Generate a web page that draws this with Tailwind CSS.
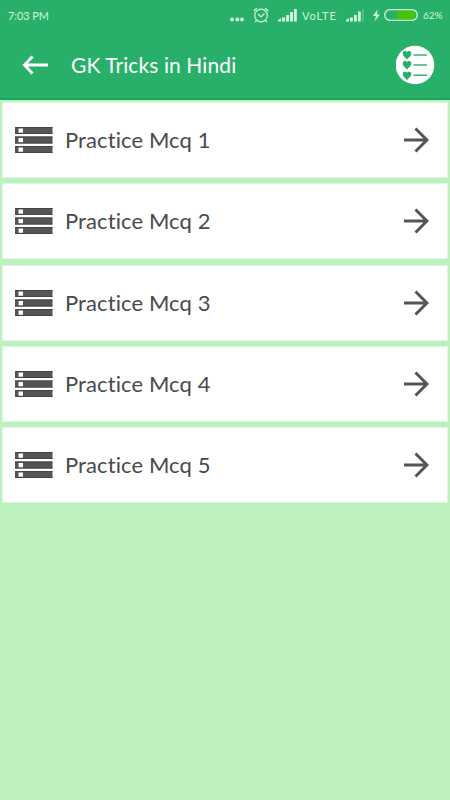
<!DOCTYPE html>
<html lang="en">
<head>
<meta charset="utf-8">
<meta name="viewport" content="width=device-width">
<title>GK Tricks in Hindi</title>
<script src="https://cdn.jsdelivr.net/npm/@tailwindcss/browser@4"></script>
</head>
<body class="w-[450px] h-[800px] overflow-hidden bg-[#bdf1bf] font-['Lato',sans-serif]">
<svg class="hidden">
  <defs>
    <symbol id="storage" viewBox="0 0 38 26">
      <path fill="#555" d="M0 0h37.500v7H0zM0 9.500h37.500v7H0zM0 19h37.500v7H0z"/>
      <path fill="none" stroke="#444" d="M0 .5h37.500M0 6.500h37.500M0 10h37.500M0 16h37.500M0 19.500h37.500M0 25.500h37.500"/>
      <path fill="#fff" d="M3.500 1.500h4.500v4.300h-4.500zM3.500 11h4.500v4.300h-4.500zM3.500 20.500h4.500v4.300h-4.500z"/>
    </symbol>
    <symbol id="next" viewBox="0 0 26 26">
      <path d="M1 13h22M12.500 1.500 24 13 12.500 24.500" fill="none" stroke="#555" stroke-width="3"/>
    </symbol>
    <symbol id="heart" viewBox="0 0 8 8">
      <path fill="#27ae68" d="M4 8 1 5C-1 3 0 0 2 0c1 0 1.700.5 2 1.300C4.300.5 5 0 6 0c2 0 3 3 1 5z"/>
    </symbol>
  </defs>
</svg>
<header class="h-[100px] bg-[#28b06a] border-b-2 border-[#12a95d] text-white">
  <div class="flex h-[30px] items-center pl-[8px] text-[#d3f5df] leading-none">
    <span class="w-[222px] text-[11px] tracking-[-0.1px]">7:03 PM</span>
    <svg class="w-[14px] h-[20px] shrink-0" viewBox="0 0 14 20" fill="currentColor"><circle cx="2" cy="14.500" r="1.900"/><circle cx="7.300" cy="14.500" r="1.900"/><circle cx="12" cy="14.500" r="1.900"/></svg>
    <svg class="ml-[9px] w-[16px] h-[16px] shrink-0" viewBox="0 0 16 16" fill="none" stroke="currentColor" stroke-width="1.200"><circle cx="8" cy="8.500" r="6.300"/><path d="m5 7 3 3 3.500-3.500M.7 4 4 1M12 1l3.300 3M3.500 13.500 2 15M12.500 13.500 14 15"/></svg>
    <svg class="ml-[9px] w-[20px] h-[14px] shrink-0" viewBox="0 0 20 14" fill="currentColor"><path d="M0 13.500V12l3-2v3.500zM4 9.500h3v4H4zM8 7h3v6.500H8zM12 4h3v9.500h-3zM16 1h2.800v12.500H16z"/></svg>
    <span class="ml-[4px] w-[36px] text-[11px] tracking-[0.9px] whitespace-nowrap">VoLTE</span>
    <svg class="ml-[8px] w-[20px] h-[14px] shrink-0" viewBox="0 0 20 14" fill="currentColor"><path d="M0 13.500V12l3-2v3.500zM4 9.500h2.800v4H4zM8 7h2.800v6.500H8zM12 3.500h2.800v10H12z"/><path opacity=".25" d="M16 1h2v12.500h-2z"/></svg>
    <svg class="ml-[7px] w-[7px] h-[13px] shrink-0" viewBox="0 0 7 13" fill="currentColor"><path d="M4.500.5 0 7h3l-1.500 5.500L7 5.500H4z"/></svg>
    <svg class="ml-[4px] w-[34px] h-[12px] shrink-0" viewBox="0 0 34 12"><path d="M13 1.500h14a4.500 4.500 0 0 1 0 9H13z" fill="#49c308"/><rect x=".7" y=".7" width="32.600" height="10.600" rx="5.300" fill="none" stroke="currentColor" stroke-width="1.300"/></svg>
    <span class="ml-[5px] text-[10px] whitespace-nowrap">62%</span>
  </div>
  <div class="flex h-[70px] items-center pl-[22px]">
    <svg class="w-[26px] h-[20px] shrink-0" viewBox="0 0 26 20" fill="none" stroke="#fff" stroke-width="2.900"><path d="M26 10H3M10.500 1.500 2.500 10 10.500 18.500"/></svg>
    <h1 class="ml-[23px] w-[325px] pb-px text-[21px] tracking-[0.1px] whitespace-nowrap leading-none">GK Tricks in Hindi</h1>
    <svg class="w-[40px] h-[40px] shrink-0" viewBox="0 0 40 40">
      <circle cx="19" cy="20" r="19.300" fill="#fff"/>
      <use href="#heart" x="6.500" y="6" width="9" height="8.500"/><use href="#heart" x="6.500" y="16" width="9" height="8.500"/><use href="#heart" x="6.500" y="26.500" width="9" height="8.500"/>
      <path d="M17.500 10h13.500M17.500 20h13.500M17.500 30.300h13.500" stroke="#35b574" stroke-width="1.600"/>
    </svg>
  </div>
</header>
<main class="flex flex-col gap-[5.250px] px-[2px] pt-[2px] text-[#4a4a4a]">
  <div class="flex h-[76px] shrink-0 items-center border border-[#dff8e1] bg-white pl-[12px]"><svg class="w-[38px] h-[26px] shrink-0"><use href="#storage"/></svg><p class="ml-[12px] w-[338px] text-[22px] leading-none tracking-[0.1px] whitespace-nowrap">Practice Mcq 1</p><svg class="w-[26px] h-[26px] shrink-0"><use href="#next"/></svg></div>
  <div class="flex h-[76px] shrink-0 items-center border border-[#dff8e1] bg-white pl-[12px]"><svg class="w-[38px] h-[26px] shrink-0"><use href="#storage"/></svg><p class="ml-[12px] w-[338px] text-[22px] leading-none tracking-[0.1px] whitespace-nowrap">Practice Mcq 2</p><svg class="w-[26px] h-[26px] shrink-0"><use href="#next"/></svg></div>
  <div class="flex h-[76px] shrink-0 items-center border border-[#dff8e1] bg-white pl-[12px]"><svg class="w-[38px] h-[26px] shrink-0"><use href="#storage"/></svg><p class="ml-[12px] w-[338px] text-[22px] leading-none tracking-[0.1px] whitespace-nowrap">Practice Mcq 3</p><svg class="w-[26px] h-[26px] shrink-0"><use href="#next"/></svg></div>
  <div class="flex h-[76px] shrink-0 items-center border border-[#dff8e1] bg-white pl-[12px]"><svg class="w-[38px] h-[26px] shrink-0"><use href="#storage"/></svg><p class="ml-[12px] w-[338px] text-[22px] leading-none tracking-[0.1px] whitespace-nowrap">Practice Mcq 4</p><svg class="w-[26px] h-[26px] shrink-0"><use href="#next"/></svg></div>
  <div class="flex h-[76px] shrink-0 items-center border border-[#dff8e1] bg-white pl-[12px]"><svg class="w-[38px] h-[26px] shrink-0"><use href="#storage"/></svg><p class="ml-[12px] w-[338px] text-[22px] leading-none tracking-[0.1px] whitespace-nowrap">Practice Mcq 5</p><svg class="w-[26px] h-[26px] shrink-0"><use href="#next"/></svg></div>
</main>
</body>
</html>
